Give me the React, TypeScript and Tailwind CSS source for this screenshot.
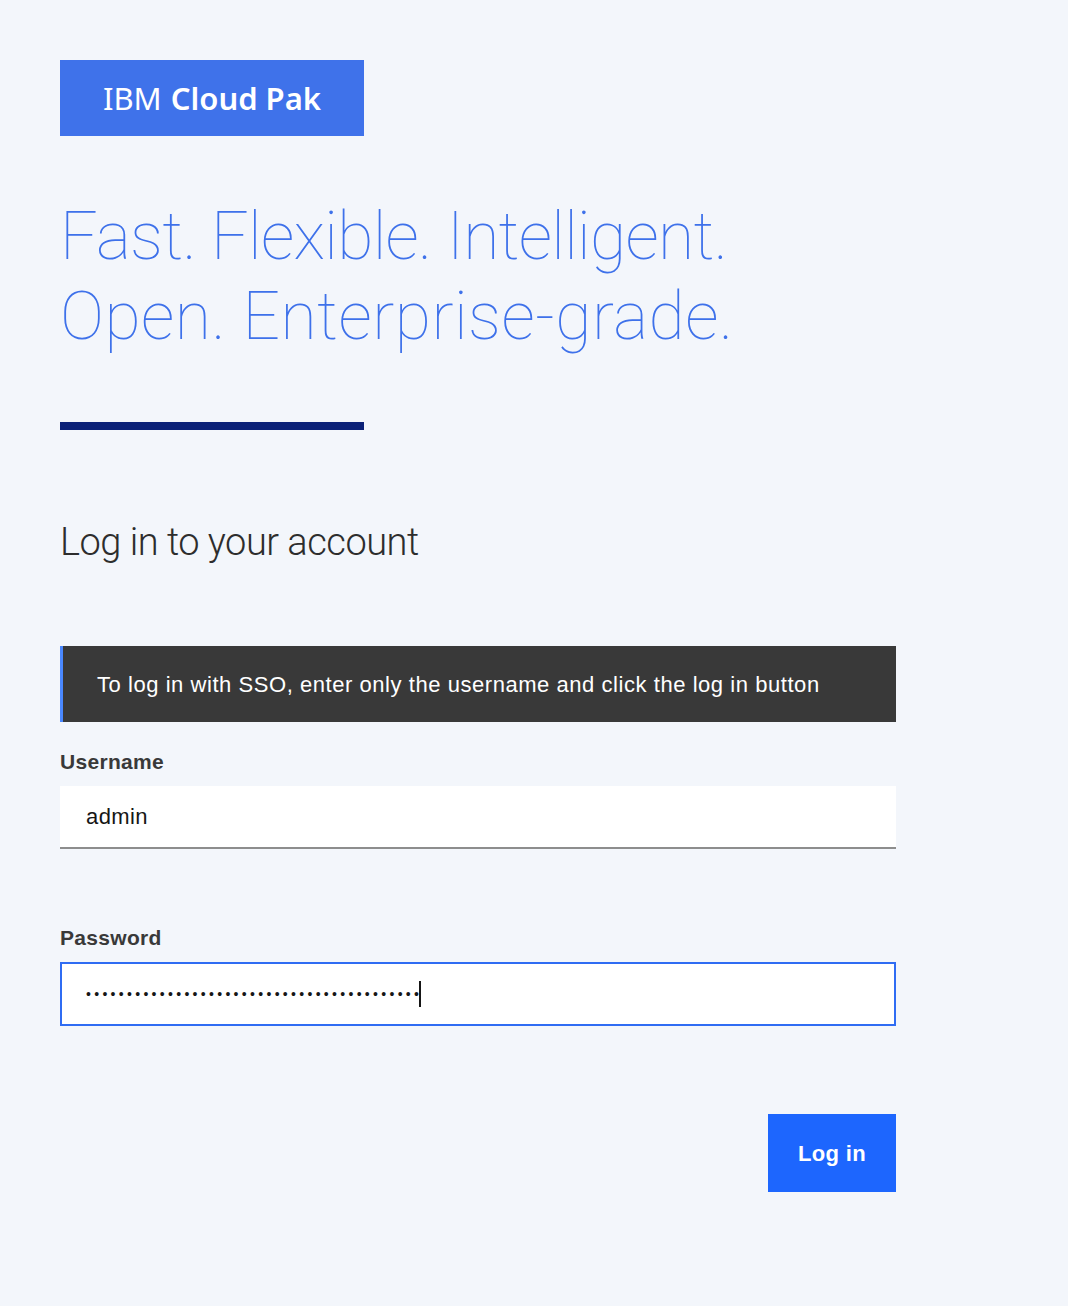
import React from 'react';

const dots = '•'.repeat(41);

export default function App() {
  return (
    <div className="min-h-screen w-full bg-[#f3f6fb] text-[#393939]" style={{ fontFamily: '"Liberation Sans", Arial, sans-serif' }}>
      <div className="pl-[60px] pt-[60px] w-[896px]">
        {/* logo */}
        <div className="flex h-[76px] w-[304px] items-center justify-center bg-[#3f72ea] text-[31px] text-white" style={{ fontFamily: '"Noto Sans", Inter, sans-serif' }}>
          <span className="font-normal">IBM</span>
          <span className="ml-[9px] font-semibold">Cloud Pak</span>
        </div>

        {/* tagline */}
        <h1 className="mt-[61px] text-[66px] font-thin leading-[80px] text-[#3e71ea]" style={{ fontFamily: 'Roboto, "Liberation Sans", sans-serif' }}>
          <span className="block tracking-[-0.7px]">Fast. Flexible. Intelligent.</span>
          <span className="block tracking-[0.5px]">Open. Enterprise-grade.</span>
        </h1>

        <div className="mt-[65px] h-[8px] w-[304px] bg-[#0b2178]" />

        <h2 className="mt-[88px] text-[38px] font-light leading-[48px] tracking-[-0.5px] text-[#2d2d2d]" style={{ fontFamily: 'Roboto, "Liberation Sans", sans-serif' }}>
          Log in to your account
        </h2>

        {/* sso notice */}
        <div className="mt-[80px] flex h-[76px] items-center border-l-[3px] border-[#4a88ff] bg-[#393939] pl-[34px] text-[22px] tracking-[0.55px] text-white">
          To log in with SSO, enter only the username and click the log in button
        </div>

        {/* username */}
        <label className="mt-[28px] block text-[21px] font-bold leading-[24px] tracking-[0.3px] text-[#393939]">Username</label>
        <div className="mt-[12px] flex h-[63px] items-center border-b-2 border-[#8d8d8d] bg-white pl-[26px] text-[22px] tracking-[0.4px] text-[#161616]">
          admin
        </div>

        {/* password */}
        <label className="mt-[77px] block text-[21px] font-bold leading-[24px] tracking-[0.3px] text-[#393939]">Password</label>
        <div className="mt-[12px] flex h-[64px] items-center border-2 border-[#2f6cf3] bg-white pl-[24px] text-[#161616]">
          <span className="text-[14px] tracking-[3.3px]">{dots}</span>
          <span className="ml-[-3px] h-[26px] w-[2px] bg-[#161616]" />
        </div>

        <div className="mt-[88px] flex justify-end">
          <button className="h-[78px] w-[128px] bg-[#1d66fe] text-[22px] font-bold tracking-[0.3px] text-white">Log in</button>
        </div>
      </div>
    </div>
  );
}
